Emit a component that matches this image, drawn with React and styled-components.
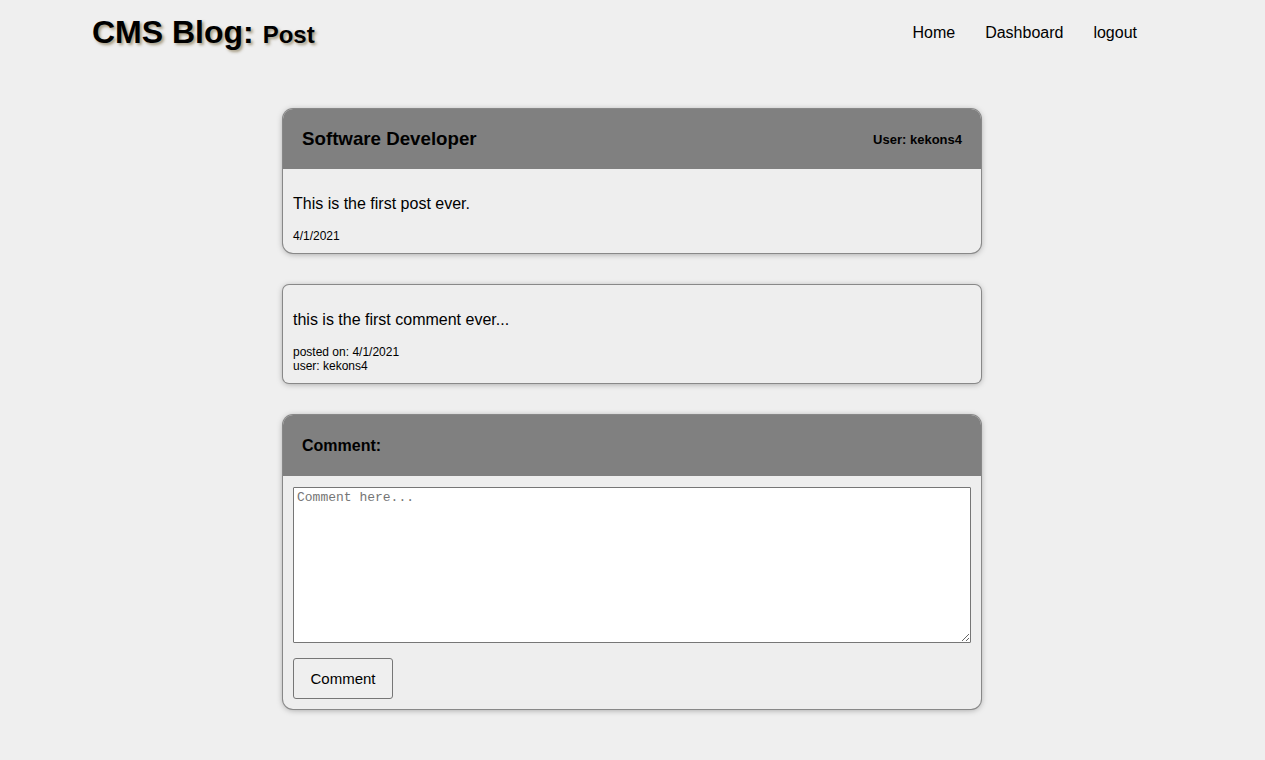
import React from 'react'
import styled, { createGlobalStyle } from 'styled-components'

const GlobalStyle = createGlobalStyle`
  html, body {
    margin: 0;
    padding: 0;
    background: #efefef;
    font-family: 'Liberation Sans', Arial, sans-serif;
    color: #000;
  }
`

const Header = styled.header`
  display: flex;
  flex-flow: row nowrap;
  justify-content: space-between;
  align-items: center;

  height: 64px;
  padding: 0 128px 0 92px;
`

const Title = styled.h1`
  margin: 0;

  font-size: 32px;
  font-weight: 700;

  text-shadow: 2px 2px 3px rgba(90, 70, 20, 0.5);
`

const SubTitle = styled.span`
  font-size: 24px;
`

const Nav = styled.nav`
  display: flex;
  flex-flow: row nowrap;
  gap: 30px;

  padding-top: 2px;
`

const NavLink = styled.a`
  font-size: 16px;
  color: #000;
  text-decoration: none;
  cursor: pointer;
`

const Main = styled.main`
  display: flex;
  flex-flow: column;
  align-items: center;
  gap: 32px;

  padding: 45px 1px 40px 0;
`

const Card = styled.section`
  width: 698px;
  box-sizing: border-box;

  overflow: hidden;

  background: #eeeeee;
  border-radius: ${p => (p.small ? '6px' : '10px')};
  box-shadow: 0 0 0 1px #888, 0 1px 6px rgba(0, 0, 0, 0.35);
`

const CardHeader = styled.div`
  display: flex;
  flex-flow: row nowrap;
  justify-content: space-between;
  align-items: center;

  height: ${p => p.height || 60}px;
  padding: 0 19px;

  background: #808080;
`

const CardTitle = styled.h2`
  margin: 0;
  font-size: ${p => p.size || 18.72}px;
  font-weight: 700;
`

const Author = styled.span`
  font-size: 13px;
  font-weight: 700;
`

const CardBody = styled.div`
  display: flex;
  flex-flow: column;

  padding: ${p => p.pad || '10px'};
`

const Text = styled.p`
  margin: 16px 0;
  font-size: 16px;
  line-height: 18px;
`

const Meta = styled.span`
  font-size: 12px;
  line-height: 14px;
`

const TextArea = styled.textarea`
  box-sizing: border-box;
  width: 100%;
  height: 156px;
  margin: 0;
  padding: 2px 3px;

  font-family: 'Liberation Mono', 'Courier New', monospace;
  font-size: 13px;

  background: #fff;
  border: 1px solid #767676;
  border-radius: 1px;

  ::placeholder {
    color: #757575;
  }
`

const Button = styled.button`
  align-self: flex-start;

  width: 100px;
  height: 41px;
  margin-top: 15px;

  font-family: 'Liberation Sans', Arial, sans-serif;
  font-size: 15px;
  color: #000;

  background: #efefef;
  border: 1px solid #767676;
  border-radius: 3px;
`

const App = () => (
  <>
    <GlobalStyle />
    <Header>
      <Title>
        CMS Blog: <SubTitle>Post</SubTitle>
      </Title>
      <Nav>
        <NavLink>Home</NavLink>
        <NavLink>Dashboard</NavLink>
        <NavLink>logout</NavLink>
      </Nav>
    </Header>
    <Main>
      <Card>
        <CardHeader>
          <CardTitle>Software Developer</CardTitle>
          <Author>User: kekons4</Author>
        </CardHeader>
        <CardBody>
          <Text>This is the first post ever.</Text>
          <Meta>4/1/2021</Meta>
        </CardBody>
      </Card>
      <Card small>
        <CardBody>
          <Text>this is the first comment ever...</Text>
          <Meta>posted on: 4/1/2021</Meta>
          <Meta>user: kekons4</Meta>
        </CardBody>
      </Card>
      <Card>
        <CardHeader height={61}>
          <CardTitle size={16}>Comment:</CardTitle>
        </CardHeader>
        <CardBody pad="11px 10px 10px">
          <TextArea placeholder="Comment here..." />
          <Button>Comment</Button>
        </CardBody>
      </Card>
    </Main>
  </>
)

export default App
